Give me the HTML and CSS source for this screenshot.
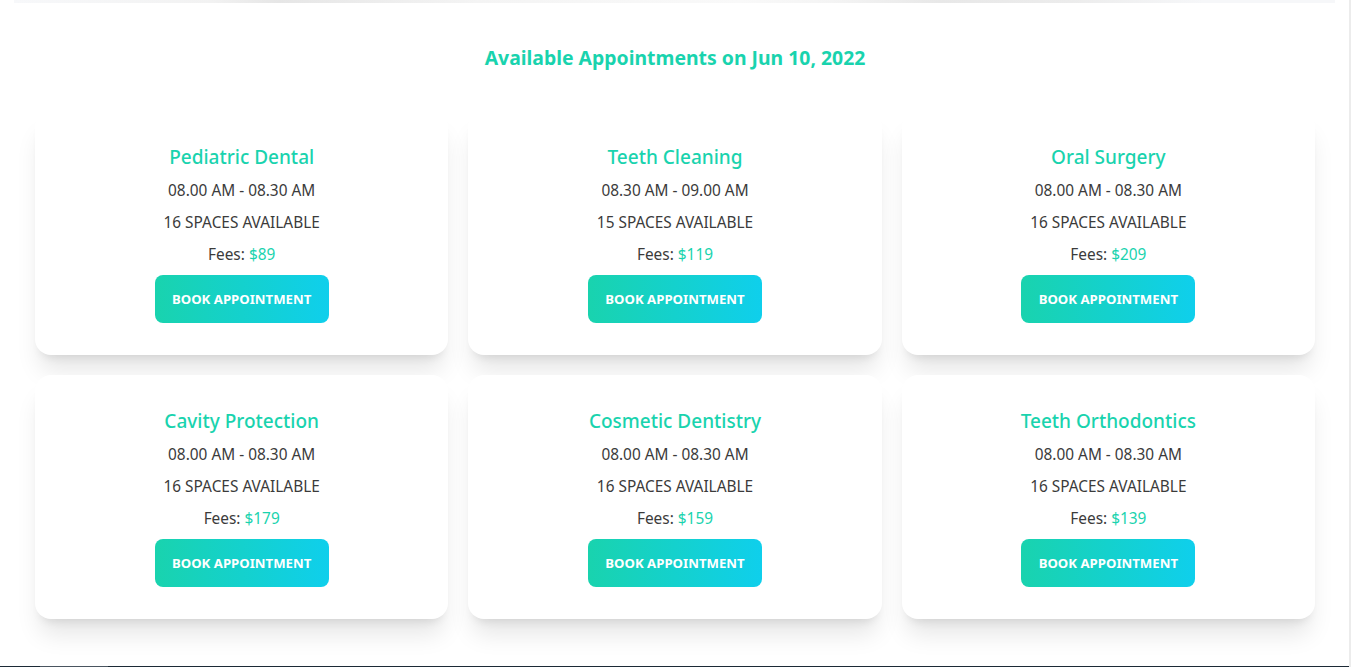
FILE: index.html
```html
<!DOCTYPE html>
<html lang="en">
<head>
<meta charset="utf-8">
<title>Available Appointments</title>
<link rel="stylesheet" href="styles.css">
</head>
<body>
<div class="page">
  <div class="hero-strip"></div>
  <section class="appointments">
    <h2 class="heading">Available Appointments on Jun 10, 2022</h2>
    <div class="grid">
      <div class="card">
        <h3 class="title">Pediatric Dental</h3>
        <p class="line">08.00 AM - 08.30 AM</p>
        <p class="line">16 SPACES AVAILABLE</p>
        <p class="line">Fees: <span class="price">$89</span></p>
        <button class="btn">BOOK APPOINTMENT</button>
      </div>
      <div class="card">
        <h3 class="title">Teeth Cleaning</h3>
        <p class="line">08.30 AM - 09.00 AM</p>
        <p class="line">15 SPACES AVAILABLE</p>
        <p class="line">Fees: <span class="price">$119</span></p>
        <button class="btn">BOOK APPOINTMENT</button>
      </div>
      <div class="card">
        <h3 class="title">Oral Surgery</h3>
        <p class="line">08.00 AM - 08.30 AM</p>
        <p class="line">16 SPACES AVAILABLE</p>
        <p class="line">Fees: <span class="price">$209</span></p>
        <button class="btn">BOOK APPOINTMENT</button>
      </div>
      <div class="card">
        <h3 class="title">Cavity Protection</h3>
        <p class="line">08.00 AM - 08.30 AM</p>
        <p class="line">16 SPACES AVAILABLE</p>
        <p class="line">Fees: <span class="price">$179</span></p>
        <button class="btn">BOOK APPOINTMENT</button>
      </div>
      <div class="card">
        <h3 class="title">Cosmetic Dentistry</h3>
        <p class="line">08.00 AM - 08.30 AM</p>
        <p class="line">16 SPACES AVAILABLE</p>
        <p class="line">Fees: <span class="price">$159</span></p>
        <button class="btn">BOOK APPOINTMENT</button>
      </div>
      <div class="card">
        <h3 class="title">Teeth Orthodontics</h3>
        <p class="line">08.00 AM - 08.30 AM</p>
        <p class="line">16 SPACES AVAILABLE</p>
        <p class="line">Fees: <span class="price">$139</span></p>
        <button class="btn">BOOK APPOINTMENT</button>
      </div>
    </div>
  </section>
  <div class="footer-edge"></div>
</div>
</body>
</html>
```

FILE: styles.css
```css
* { box-sizing: border-box; }
html, body { margin: 0; padding: 0; background: #fff; }
body {
  font-family: "Noto Sans", "Open Sans", sans-serif;
  color: #3b3b3b;
  overflow: hidden;
}
.page {
  width: 1351px;
  height: 667px;
  border-right: 2px solid #ececec;
  display: flex;
  flex-direction: column;
  overflow: hidden;
}
.hero-strip {
  height: 3px;
  margin: 0 14px 0 14px;
  background: linear-gradient(90deg, #f7f8fa 0%, #f2f2f2 15%, #e6e6e6 20%, #f4f4f4 35%, #f9f9f9 55%, #f4f4f4 62%, #e8e8e8 70%, #ececec 80%, #f6f7f9 90%);
}
.appointments {
  flex: 1;
  padding: 41px 34px 0 35px;
}
.heading {
  margin: 0 0 39px;
  text-align: center;
  font-size: 19.4px;
  line-height: 28px;
  font-weight: 700;
  color: #19d3ae;
}
.grid {
  display: grid;
  grid-template-columns: repeat(3, 1fr);
  gap: 20px;
}
.card {
  background: #fff;
  border-radius: 16px;
  box-shadow: 0 20px 25px -5px rgba(0,0,0,0.1), 0 8px 10px -6px rgba(0,0,0,0.1);
  padding: 32px;
  display: flex;
  flex-direction: column;
  align-items: center;
  gap: 8px;
}
.title {
  margin: 0;
  font-size: 19px;
  line-height: 28px;
  font-weight: 500;
  color: #19d3ae;
}
.line {
  margin: 0;
  font-size: 15.4px;
  line-height: 24px;
}
.price { color: #19d3ae; }
.btn {
  width: 174px;
  height: 48px;
  border: none;
  border-radius: 8px;
  background: linear-gradient(90deg, #19d3ae 0%, #0fcfec 100%);
  color: #fff;
  font-family: inherit;
  font-size: 13.2px;
  font-weight: 700;
  padding: 0;
  cursor: pointer;
}
.footer-edge {
  height: 1px;
  background: linear-gradient(90deg, #1c2a36 0%, #1c2a36 3%, #4a5560 3%, #4a5560 8%, #1c2a36 8%);
}
```
